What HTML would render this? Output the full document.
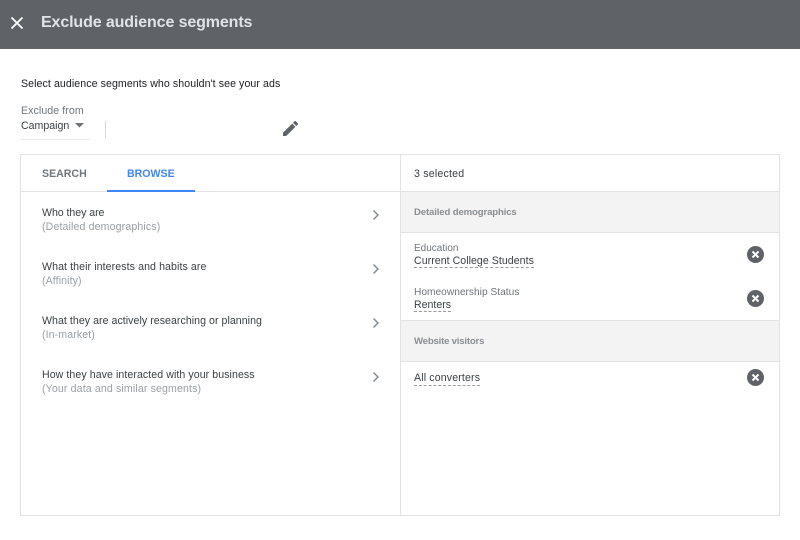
<!DOCTYPE html>
<html><head><meta charset="utf-8"><style>
html,body{margin:0;padding:0;background:#fff}
body{width:800px;height:540px;position:relative;overflow:hidden;font-family:"Liberation Sans",Arial,sans-serif}
.t{position:absolute;white-space:nowrap;line-height:14px;filter:blur(.25px)}
.b{position:absolute}
.d{color:#3c4043;font-size:10.6px}
.g{color:#80868b;font-size:10.6px}
.u{border-bottom:1px dashed #9a9a9a;height:0;position:absolute}
</style></head><body>
<div class="b" style="left:0;top:0;width:800px;height:49px;background:#5f6368"></div>
<svg class="b" style="left:9px;top:14.5px" width="16" height="16" viewBox="0 0 16 16"><path d="M2.5 2.5L13.5 13.5M13.5 2.5L2.5 13.5" stroke="#fff" stroke-width="1.9" fill="none"/></svg>
<div class="t" style="left:41px;top:13px;line-height:20px;font-size:16px;font-weight:bold;color:#e1e3e6;letter-spacing:-.12px">Exclude audience segments</div>
<div class="t d" style="left:21px;top:77px;color:#202124;letter-spacing:.08px">Select audience segments who shouldn't see your ads</div>
<div class="t g" style="left:21px;top:104px;color:#70757a;letter-spacing:.08px">Exclude from</div>
<div class="t d" style="left:21px;top:119px;color:#3c4043">Campaign</div>
<svg class="b" style="left:75px;top:123px" width="9" height="5"><path d="M0 0H9L4.5 4.5Z" fill="#6f7377"/></svg>
<div class="b" style="left:21px;top:139px;width:69px;height:1px;background:#e8e8e8"></div>
<div class="b" style="left:105px;top:121px;width:1px;height:17px;background:#d5d5d5"></div>
<svg class="b" style="left:282px;top:120px" width="17" height="17" viewBox="0 0 17 17"><path d="M1 12.8V16H4.2L13.4 6.8L10.2 3.6ZM15.8 4.4C16.1 4.1 16.1 3.5 15.8 3.2L13.8 1.2C13.5 .9 12.9 .9 12.6 1.2L11 2.8L14.2 6Z" fill="#5f6368"/></svg>

<div class="b" style="left:20px;top:154px;width:758px;height:360px;border:1px solid #e3e3e3"></div>
<div class="b" style="left:400px;top:155px;width:1px;height:360px;background:#e3e3e3"></div>
<div class="b" style="left:21px;top:191px;width:379px;height:1px;background:#e3e3e3"></div>
<div class="t" style="left:42px;top:167px;font-size:10.6px;font-weight:bold;color:#70757a">SEARCH</div>
<div class="t" style="left:127px;top:167px;font-size:10.6px;font-weight:bold;color:#4285f4">BROWSE</div>
<div class="b" style="left:107px;top:190px;width:88px;height:2px;background:#4285f4"></div>

<div class="t d" style="left:42px;top:206px;letter-spacing:-.05px">Who they are</div>
<div class="t g" style="left:42px;top:220px;color:#9aa0a6;letter-spacing:.13px">(Detailed demographics)</div>
<div class="t d" style="left:42px;top:260px;letter-spacing:.09px">What their interests and habits are</div>
<div class="t g" style="left:42px;top:274px;color:#9aa0a6;letter-spacing:.1px">(Affinity)</div>
<div class="t d" style="left:42px;top:314px;letter-spacing:.045px">What they are actively researching or planning</div>
<div class="t g" style="left:42px;top:328px;color:#9aa0a6;letter-spacing:.1px">(In-market)</div>
<div class="t d" style="left:42px;top:368px;letter-spacing:.07px">How they have interacted with your business</div>
<div class="t g" style="left:42px;top:382px;color:#9aa0a6;letter-spacing:.13px">(Your data and similar segments)</div>
<svg class="b" style="left:372px;top:209px" width="9" height="12"><path d="M1.5 1.5L6 6L1.5 10.5" stroke="#80868b" stroke-width="1.4" fill="none"/></svg>
<svg class="b" style="left:372px;top:263px" width="9" height="12"><path d="M1.5 1.5L6 6L1.5 10.5" stroke="#80868b" stroke-width="1.4" fill="none"/></svg>
<svg class="b" style="left:372px;top:317px" width="9" height="12"><path d="M1.5 1.5L6 6L1.5 10.5" stroke="#80868b" stroke-width="1.4" fill="none"/></svg>
<svg class="b" style="left:372px;top:371px" width="9" height="12"><path d="M1.5 1.5L6 6L1.5 10.5" stroke="#80868b" stroke-width="1.4" fill="none"/></svg>

<div class="t d" style="left:414px;top:167px;letter-spacing:.2px">3 selected</div>
<div class="b" style="left:401px;top:191px;width:378px;height:40px;background:#f3f3f3;border-top:1px solid #e3e3e3;border-bottom:1px solid #e3e3e3"></div>
<div class="t" style="left:414px;top:206px;font-size:9.6px;font-weight:bold;color:#8a8e92;letter-spacing:-.14px">Detailed demographics</div>
<div class="t g" style="left:414px;top:242px;font-size:10px;color:#70757a">Education</div>
<div class="t d" style="left:414px;top:254px;letter-spacing:.04px">Current College Students</div>
<div class="u" style="left:414px;top:267px;width:120px"></div>
<div class="t g" style="left:414px;top:286px;font-size:10.2px;color:#70757a">Homeownership Status</div>
<div class="t d" style="left:414px;top:298px">Renters</div>
<div class="u" style="left:414px;top:311px;width:37px"></div>
<div class="b" style="left:401px;top:320px;width:378px;height:40px;background:#f3f3f3;border-top:1px solid #e3e3e3;border-bottom:1px solid #e3e3e3"></div>
<div class="t" style="left:414px;top:335px;font-size:9.6px;font-weight:bold;color:#8a8e92;letter-spacing:-.2px">Website visitors</div>
<div class="t d" style="left:414px;top:371px;letter-spacing:.14px">All converters</div>
<div class="u" style="left:414px;top:385px;width:66px"></div>
<svg class="b" style="left:747px;top:246px" width="17" height="17" viewBox="0 0 17 17"><circle cx="8.5" cy="8.5" r="8.5" fill="#5f6368"/><path d="M5.5 5.5L11.5 11.5M11.5 5.5L5.5 11.5" stroke="#fff" stroke-width="2"/></svg>
<svg class="b" style="left:747px;top:290px" width="17" height="17" viewBox="0 0 17 17"><circle cx="8.5" cy="8.5" r="8.5" fill="#5f6368"/><path d="M5.5 5.5L11.5 11.5M11.5 5.5L5.5 11.5" stroke="#fff" stroke-width="2"/></svg>
<svg class="b" style="left:747px;top:369px" width="17" height="17" viewBox="0 0 17 17"><circle cx="8.5" cy="8.5" r="8.5" fill="#5f6368"/><path d="M5.5 5.5L11.5 11.5M11.5 5.5L5.5 11.5" stroke="#fff" stroke-width="2"/></svg>
</body></html>
